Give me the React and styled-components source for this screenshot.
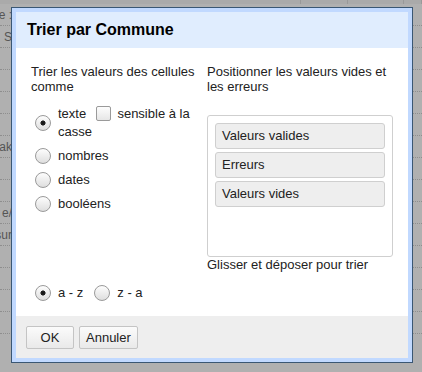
import styled, { createGlobalStyle } from "styled-components";

const GlobalStyle = createGlobalStyle`
  html, body {
    margin: 0;
    padding: 0;
  }
  body {
    width: 422px;
    height: 372px;
    overflow: hidden;
    background: #b0b0b0;
    font-family: "Liberation Sans", Arial, sans-serif;
  }
  * {
    box-sizing: border-box;
  }
`;

const sheetRows = ["e :", "S", "", "", "", "", "ak", "", "", "e/", "sur", "", "", "", ""];
const headerCells = [301, 47, 56, 18];

function Radio({ checked }) {
  return <RadioCircle $checked={checked} />;
}

function RadioOption({ checked, children }) {
  return (
    <OptionRow>
      <Radio checked={checked} />
      <OptionLabel>{children}</OptionLabel>
    </OptionRow>
  );
}

function App() {
  return (
    <Page>
      <GlobalStyle />
      <Sheet>
        <HeaderStrip>
          {headerCells.map((w, i) => (
            <HeaderCell key={i} $width={w} />
          ))}
        </HeaderStrip>
        {sheetRows.map((t, i) => (
          <SheetRow key={i}>
            <SheetCell>{t}</SheetCell>
          </SheetRow>
        ))}
      </Sheet>

      <Dialog>
        <Title>Trier par Commune</Title>
        <Content>
          <LeftCol>
            <Heading>Trier les valeurs des cellules comme</Heading>
            <OptionList>
              <RadioOption checked>
                texte <Checkbox /> sensible à la casse
              </RadioOption>
              <RadioOption>nombres</RadioOption>
              <RadioOption>dates</RadioOption>
              <RadioOption>booléens</RadioOption>
            </OptionList>
            <OrderRow>
              <Radio checked />
              <OrderLabel>a - z</OrderLabel>
              <Radio />
              <OrderLabel>z - a</OrderLabel>
            </OrderRow>
          </LeftCol>
          <RightCol>
            <Heading>Positionner les valeurs vides et les erreurs</Heading>
            <DropBox>
              <DragItem>Valeurs valides</DragItem>
              <DragItem>Erreurs</DragItem>
              <DragItem>Valeurs vides</DragItem>
            </DropBox>
            <Hint>Glisser et déposer pour trier</Hint>
          </RightCol>
        </Content>
        <Footer>
          <Button>OK</Button>
          <Button>Annuler</Button>
        </Footer>
      </Dialog>
    </Page>
  );
}

export default App;

const Page = styled.div`
  position: relative;
  width: 422px;
  height: 372px;
  overflow: hidden;
  background: #b0b0b0;
`;

const Sheet = styled.div`
  display: flex;
  flex-direction: column;
`;

const HeaderStrip = styled.div`
  display: flex;
  height: 4px;
  background: #aaaaaa;
`;

const HeaderCell = styled.div`
  width: ${(p) => p.$width}px;
  height: 100%;
  border-right: 1px solid #999;
`;

const SheetRow = styled.div`
  display: flex;
  height: 22px;
  border-bottom: 1px dotted #8e8e8e;
`;

const SheetCell = styled.div`
  width: 12px;
  overflow: hidden;
  display: flex;
  align-items: center;
  justify-content: flex-end;
  white-space: nowrap;
  font-size: 12px;
  color: #555;
`;

const Dialog = styled.div`
  position: absolute;
  left: 11px;
  top: 7px;
  width: 402px;
  border: 1px solid #3a5774;
  background: #c1d9ff;
  padding: 4px;
  display: flex;
  flex-direction: column;
`;

const Title = styled.div`
  height: 36px;
  background: #e0edfe;
  padding-left: 11px;
  display: flex;
  align-items: center;
  font-size: 16px;
  font-weight: bold;
  color: #000;
`;

const Content = styled.div`
  height: 268px;
  background: #fff;
  padding: 16px 15px 14px;
  display: grid;
  grid-template-columns: 170px 186px;
  column-gap: 6px;
  font-size: 13px;
  color: #222;
`;

const LeftCol = styled.div`
  display: flex;
  flex-direction: column;
`;

const RightCol = styled.div`
  display: flex;
  flex-direction: column;
`;

const Heading = styled.div`
  line-height: 15px;
`;

const OptionList = styled.div`
  display: flex;
  flex-direction: column;
  gap: 6px;
  margin-top: 11px;
`;

const OptionRow = styled.div`
  display: flex;
  align-items: center;
  gap: 7px;
  padding-left: 4px;
`;

const OptionLabel = styled.div`
  flex: 1;
  line-height: 18px;
`;

const RadioCircle = styled.span`
  flex: none;
  display: inline-block;
  width: 16px;
  height: 16px;
  border-radius: 50%;
  border: 1px solid #9a9a9a;
  background: ${(p) =>
    p.$checked
      ? "radial-gradient(circle at 50% 50%, #111 0, #222 2.3px, transparent 2.8px), linear-gradient(#fdfdfd, #dedede)"
      : "linear-gradient(#fdfdfd, #dedede)"};
`;

const Checkbox = styled.span`
  display: inline-block;
  width: 15px;
  height: 15px;
  margin: 0 3px 0 6px;
  vertical-align: middle;
  border: 1px solid #9a9a9a;
  border-radius: 2px;
  background: linear-gradient(#fdfdfd, #e6e6e6);
  position: relative;
  top: -1px;
`;

const OrderRow = styled.div`
  margin-top: auto;
  display: flex;
  align-items: center;
  padding-left: 4px;
  line-height: 18px;
`;

const OrderLabel = styled.span`
  margin: 0 11px 0 7px;
`;

const DropBox = styled.div`
  margin-top: 21px;
  height: 142px;
  border: 1px solid #cfcfcf;
  border-radius: 3px;
  padding: 7px;
  display: flex;
  flex-direction: column;
  gap: 3px;
`;

const DragItem = styled.div`
  height: 26px;
  line-height: 24px;
  padding: 0 6px;
  border: 1px solid #cfcfcf;
  border-radius: 3px;
  background: #eeeeee;
`;

const Hint = styled.div`
  line-height: 15px;
`;

const Footer = styled.div`
  height: 42px;
  background: #eeeeee;
  padding: 10px;
  display: flex;
  align-items: flex-start;
  gap: 5px;
`;

const Button = styled.button`
  height: 23px;
  min-width: 48px;
  padding: 0 6px;
  border: 1px solid #c4c4c4;
  border-radius: 2px;
  background: linear-gradient(#fbfbfb, #e9e9e9);
  font-family: "Liberation Sans", Arial, sans-serif;
  font-size: 13px;
  color: #222;
  cursor: pointer;
`;
